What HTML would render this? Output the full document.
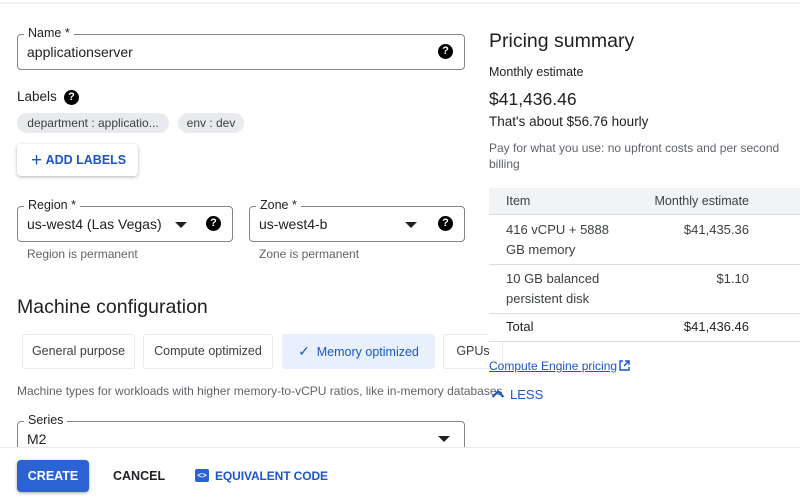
<!DOCTYPE html>
<html><head><meta charset="utf-8"><style>
*{box-sizing:border-box;margin:0;padding:0}
body{width:800px;height:499px;overflow:hidden;background:#fff;font-family:"Liberation Sans",Arial,sans-serif;color:#202124;position:relative}
.a{position:absolute}
.field{position:absolute;border:1px solid #80868b;border-radius:4px}
.lbl{position:absolute;top:-9px;left:6px;background:#fff;padding:0 4px;font-size:12.5px;color:#202124}
.val{position:absolute;left:9px;font-size:14px;color:#202124}
.q{position:absolute;width:15px;height:15px;border-radius:50%;background:#000;color:#fff;font-size:11px;font-weight:bold;text-align:center;line-height:15px}
.tri{position:absolute;width:0;height:0;border-left:6px solid transparent;border-right:6px solid transparent;border-top:6px solid #202124}
.hint{position:absolute;font-size:12px;color:#5f6368}
.chip{position:absolute;height:20px;border-radius:10px;background:#e8eaed;font-size:12px;line-height:20px;padding:0;text-align:center;white-space:nowrap;color:#3c4043}
.tab{position:absolute;top:334px;height:35px;border:1px solid #e8eaed;border-radius:3px;font-size:12.5px;line-height:33px;text-align:center;color:#3c4043;background:#fff}
.row{position:absolute;left:489px;width:311px;border-bottom:1px solid #dadce0;font-size:13px;color:#3c4043}
</style></head><body>
<div class="a" style="left:0;top:2px;width:800px;height:2px;background:#f1f1f1"></div>

<div class="field" style="left:17px;top:34px;width:448px;height:36px">
<div class="lbl">Name *</div><div class="val" style="top:9px">applicationserver</div>
<div class="q" style="right:11px;top:9px">?</div></div>

<div class="a" style="left:17px;top:89px;font-size:13.5px">Labels</div>
<div class="q" style="left:64px;top:90px">?</div>
<div class="chip" style="left:17px;top:113px;width:152px">department : applicatio...</div>
<div class="chip" style="left:178px;top:113px;width:66px">env : dev</div>
<div class="a" style="left:17px;top:144px;width:121px;height:32px;border-radius:4px;box-shadow:0 1px 3px rgba(0,0,0,.3);color:#1a56c5;font-size:12.5px;font-weight:bold;line-height:32px;padding-left:14px"><span style="font-size:19px;font-weight:normal;vertical-align:-2px">+</span>&nbsp;ADD LABELS</div>

<div class="field" style="left:17px;top:206px;width:216px;height:36px">
<div class="lbl">Region *</div><div class="val" style="top:9px">us-west4 (Las Vegas)</div>
<div class="tri" style="left:157px;top:15px"></div><div class="q" style="right:11px;top:9px">?</div></div>
<div class="hint" style="left:27px;top:247px">Region is permanent</div>

<div class="field" style="left:249px;top:206px;width:216px;height:36px">
<div class="lbl">Zone *</div><div class="val" style="top:9px">us-west4-b</div>
<div class="tri" style="left:155px;top:15px"></div><div class="q" style="right:11px;top:9px">?</div></div>
<div class="hint" style="left:259px;top:247px">Zone is permanent</div>

<div class="a" style="left:17px;top:296px;font-size:19.5px">Machine configuration</div>
<div class="tab" style="left:22px;width:113px">General purpose</div>
<div class="tab" style="left:143px;width:130px">Compute optimized</div>
<div class="tab" style="left:282px;width:153px;background:#e8f0fe;color:#1a56c5;border-color:#e8f0fe"><span style="font-size:14px">✓</span>&nbsp; Memory optimized</div>
<div class="tab" style="left:443px;width:60px">GPUs</div>
<div class="a" style="left:17px;top:384px;font-size:12px;color:#5f6368;white-space:nowrap">Machine types for workloads with higher memory-to-vCPU ratios, like in-memory databases</div>

<div class="field" style="left:17px;top:421px;width:448px;height:40px">
<div class="lbl" style="font-size:12.5px">Series</div><div class="val" style="top:9px">M2</div>
<div class="tri" style="left:420px;top:14px"></div></div>

<!-- pricing panel -->
<div class="a" style="left:489px;top:20px;width:311px;height:322px;background:#fff"></div>
<div class="a" style="left:489px;top:30px;font-size:19.5px">Pricing summary</div>
<div class="a" style="left:489px;top:65px;font-size:12.5px">Monthly estimate</div>
<div class="a" style="left:489px;top:89px;font-size:17.5px">$41,436.46</div>
<div class="a" style="left:489px;top:114px;font-size:13.5px">That's about $56.76 hourly</div>
<div class="a" style="left:489px;top:140px;width:311px;font-size:12px;color:#5f6368;line-height:16px">Pay for what you use: no upfront costs and per second billing</div>
<div class="row" style="top:188px;height:27px;background:#f1f3f4;font-size:12.5px;line-height:27px"><span class="a" style="left:17px">Item</span><span class="a" style="right:51px">Monthly estimate</span></div>
<div class="row" style="top:215px;height:50px;line-height:20px"><span class="a" style="left:17px;top:5px">416 vCPU + 5888<br>GB memory</span><span class="a" style="right:51px;top:5px">$41,435.36</span></div>
<div class="row" style="top:265px;height:49px;line-height:20px"><span class="a" style="left:17px;top:4px">10 GB balanced<br>persistent disk</span><span class="a" style="right:51px;top:4px">$1.10</span></div>
<div class="row" style="top:314px;height:28px;line-height:26px;color:#202124"><span class="a" style="left:17px">Total</span><span class="a" style="right:51px">$41,436.46</span></div>
<div class="a" style="left:489px;top:359px;font-size:12px;color:#1a56c5;text-decoration:underline">Compute Engine pricing</div>
<svg class="a" style="left:619px;top:360px" width="11" height="11" viewBox="0 0 11 11" fill="none" stroke="#1a56c5" stroke-width="1.4"><path d="M4 1H1v9h9V7M6 1h4v4M10 1L5 6"/></svg>
<svg class="a" style="left:491px;top:389px" width="14" height="9" viewBox="0 0 14 9"><path d="M1.5 8L7 2.5 12.5 8" fill="none" stroke="#1a56c5" stroke-width="2.2"/></svg>
<div class="a" style="left:510px;top:387px;font-size:13px;color:#1a56c5">LESS</div>

<!-- footer -->
<div class="a" style="left:0;top:447px;width:800px;height:52px;background:#fff;border-top:1px solid #e8eaed"></div>
<div class="a" style="left:17px;top:460px;width:72px;height:32px;background:#2b63d3;border-radius:4px;box-shadow:0 1px 3px rgba(0,0,0,.35);color:#fff;font-size:12.5px;font-weight:bold;text-align:center;line-height:32px">CREATE</div>
<div class="a" style="left:113px;top:469px;font-size:12.5px;font-weight:bold;color:#202124">CANCEL</div>
<div class="a" style="left:195px;top:469px;width:14px;height:13px;background:#2b63d3;border-radius:2px;color:#fff;font-size:8px;font-weight:bold;text-align:center;line-height:13px">&lt;&gt;</div>
<div class="a" style="left:215px;top:469px;font-size:12px;font-weight:bold;color:#1a56c5;letter-spacing:-0.1px">EQUIVALENT CODE</div>
</body></html>
